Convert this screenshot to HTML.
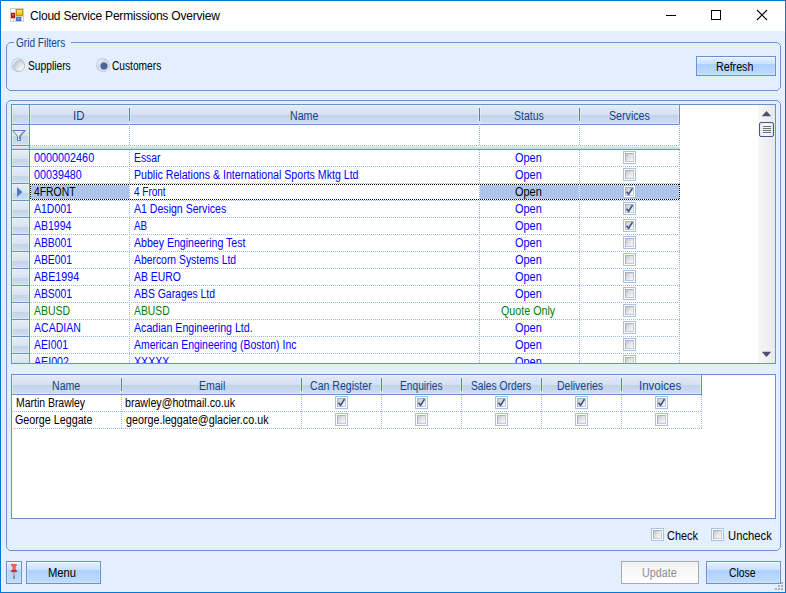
<!DOCTYPE html>
<html><head><meta charset="utf-8"><title>Cloud Service Permissions Overview</title>
<style>
*{box-sizing:border-box;margin:0;padding:0}
html,body{width:786px;height:593px;overflow:hidden;background:#e3efff}
body{font-family:"Liberation Sans",sans-serif;font-size:12px;color:#000;position:relative}
.win div,.win span,.win svg,.win i{position:absolute}
.win{position:absolute;left:0;top:0;width:786px;height:593px;border:1px solid #0078d7;background:#e3efff;overflow:hidden}
.win>*{margin:-1px 0 0 -1px}
.title{left:1px;top:1px;width:784px;height:30px;background:#fff}
.ttext{left:30px;top:9px;font-size:12px;line-height:15px;white-space:nowrap;color:#000;letter-spacing:-0.21px}
.gb{border:1px solid #6593cf;border-radius:3px}
.gbl{background:#e3efff}
.t{white-space:nowrap;line-height:14px;height:14px;font-size:12px;transform-origin:0 0}
.lb{color:#15428b}
.radio{width:14px;height:14px;border-radius:50%;background:radial-gradient(circle at 50% 50%,#fff 0,#fff 5.2px,#b4c9ea 6px,#bdd0ee 6.8px,rgba(189,208,238,0) 7.4px)}
.radio::after{content:"";position:absolute;left:2px;top:2px;width:10px;height:10px;border-radius:50%;border:1px solid #bcc1cb;background:linear-gradient(135deg,#c4c4c6 10%,#e6e6e8 55%,#fcfcfc 90%)}
.radio.on::after{border-color:#c9cdd6;background:radial-gradient(circle at 50% 50%,#46669a 0,#46669a 2.9px,#9ca8be 3.7px,#dfe3ea 4.4px,#f4f5f8 5px)}
.btn{border:1px solid #6593cf;background:linear-gradient(#e6f0ff 0,#c8dffe 38%,#add1ff 40%,#c0dbff 100%);box-shadow:inset 0 1px 0 rgba(255,255,255,.45),inset 0 0 0 1px rgba(255,255,255,.25)}
.btn.dis{border-color:#a9a9a9;background:linear-gradient(#f2f2f2,#fff);box-shadow:none}
.dt{color:#8d8d8d}
.grid{border:1px solid #6593cf;background:#fff;overflow:hidden}
.hd{background:linear-gradient(#e4ebf6 0,#d6e0f0 50%,#c1d3ea 55%,#d0ddf0 100%);border-bottom:1px solid #6593cf;height:20px}
.hc{top:0;height:19px;box-shadow:inset 0 0 0 1px rgba(255,255,255,.3)}
.ht{color:#15428b}
.hs{width:1px;top:3px;height:13px;background:#4f7fc4}
.sel{left:0;width:18px;border-right:1px solid #6593cf;border-bottom:1px solid #6593cf;background:linear-gradient(#e6ecf6 0,#d9e3f1 53%,#c2d3ea 59%,#d2deef 100%);box-shadow:inset 0 0 0 1px rgba(255,255,255,.3)}
.sel.h{background:linear-gradient(#e4ebf6 0,#d6e0f0 50%,#c1d3ea 55%,#d0ddf0 100%)}
.hl{height:1px;background-image:linear-gradient(90deg,#9db8de 50%,transparent 50%);background-size:2px 1px}
.vl{width:1px;background-image:linear-gradient(#9db8de 50%,transparent 50%);background-size:1px 2px}
.hlk{height:1px;background-image:linear-gradient(90deg,#000 50%,#fff 50%);background-size:2px 1px}
.vlk{width:1px;background-image:linear-gradient(#000 50%,#fff 50%);background-size:1px 2px}
.b{color:#0000ff}.g{color:#008000}.s{color:#000}
.cb{width:13px;height:13px;border:1px solid #a9c0e4;background:#fff}
.cb i{left:1px;top:1px;width:9px;height:9px;border:1px solid #a9b0be;border-right-color:#c3c8d2;border-bottom-color:#c3c8d2;background:linear-gradient(135deg,#c6c8cd 0,#e4e5e8 50%,#fbfbfb 100%)}
.cb .tick{left:-1px;top:-1px}
</style></head><body><div class="win">
<div class="title"></div>
<svg style="left:10px;top:8px" width="14" height="14" viewBox="0 0 14 14">
<defs><linearGradient id="gy" x1="0" y1="0" x2="0" y2="1"><stop offset="0" stop-color="#ffe98a"/><stop offset="1" stop-color="#f8b800"/></linearGradient>
<linearGradient id="gr" x1="0" y1="0" x2="0" y2="1"><stop offset="0" stop-color="#f08070"/><stop offset="1" stop-color="#c01808"/></linearGradient>
<linearGradient id="gbl" x1="0" y1="0" x2="0" y2="1"><stop offset="0" stop-color="#8fb4f4"/><stop offset="1" stop-color="#3a6fd0"/></linearGradient></defs>
<rect x="0" y="0" width="14" height="14" fill="#cfcfcf"/>
<rect x="1" y="1" width="4" height="3" fill="#fff"/><rect x="1" y="11" width="2" height="2" fill="#fff"/><rect x="4" y="11" width="1" height="2" fill="#fff"/><rect x="12" y="9" width="1" height="4" fill="#fff"/>
<rect x="6" y="1" width="7" height="7" fill="#c89400"/><rect x="7" y="2" width="5" height="5" fill="url(#gy)"/>
<rect x="1" y="5" width="4" height="5" fill="#a81000"/><rect x="2" y="6" width="2" height="3" fill="url(#gr)"/>
<rect x="6" y="9" width="5" height="4" fill="#3c72d4"/><rect x="7" y="10" width="3" height="2" fill="url(#gbl)"/>
</svg>
<div class="ttext">Cloud Service Permissions Overview</div>
<svg style="left:660px;top:5px" width="116" height="22" viewBox="0 0 116 22"><g stroke="#000" stroke-width="1" fill="none" shape-rendering="crispEdges">
<path d="M6 10.5 H16"/><rect x="51.5" y="5.5" width="9" height="9"/></g>
<path d="M97 5 L107 15 M107 5 L97 15" stroke="#000" stroke-width="1.1" fill="none"/></svg>
<svg style="left:6px;top:42px" width="775" height="49" viewBox="0 0 775 49"><path d="M0.5 3.5 L3.5 0.5 H771.5 L774.5 3.5 V45.5 L771.5 48.5 H3.5 L0.5 45.5 Z" fill="none" stroke="#6593cf" stroke-width="1"/></svg>
<div class="gbl" style="left:14px;top:40px;width:57px;height:5px"></div>
<span class="t lb" style="left:16.42px;top:36px;transform:scaleX(0.8387)">Grid Filters</span>
<div class="radio" style="left:11px;top:58px"></div><span class="t " style="left:27.55px;top:59px;transform:scaleX(0.8544)">Suppliers</span>
<div class="radio on" style="left:96px;top:58px"></div><span class="t " style="left:112.21px;top:59px;transform:scaleX(0.8492)">Customers</span>
<div class="btn" style="left:696px;top:56px;width:80px;height:20px"></div><span class="t " style="left:716.31px;top:60px;transform:scaleX(0.8900)">Refresh</span>
<svg style="left:6px;top:100px" width="775" height="451" viewBox="0 0 775 451"><path d="M0.5 3.5 L3.5 0.5 H771.5 L774.5 3.5 V447.5 L771.5 450.5 H3.5 L0.5 447.5 Z" fill="none" stroke="#6593cf" stroke-width="1"/></svg>
<div class="grid" style="left:11px;top:104px;width:765px;height:260px">
<div class="hd" style="left:0;top:0;width:668px"></div>
<div class="sel h" style="top:0;height:20px"></div>
<div class="hc" style="left:18px;width:99px"></div>
<div class="hs" style="left:117px"></div>
<span class="t ht" style="left:61.45px;top:4px;transform:scaleX(0.9457)">ID</span>
<div class="hc" style="left:118px;width:349px"></div>
<div class="hs" style="left:467px"></div>
<span class="t ht" style="left:277.52px;top:4px;transform:scaleX(0.8845)">Name</span>
<div class="hc" style="left:468px;width:99px"></div>
<div class="hs" style="left:567px"></div>
<span class="t ht" style="left:502.02px;top:4px;transform:scaleX(0.8751)">Status</span>
<div class="hc" style="left:568px;width:99px"></div>
<div class="hs" style="left:667px;top:0;height:20px;background:#6593cf"></div>
<span class="t ht" style="left:596.71px;top:4px;transform:scaleX(0.8885)">Services</span>
<div class="sel" style="top:20px;height:21px"></div>
<svg style="left:0px;top:24px" width="15" height="13" viewBox="0 0 15 13"><path d="M0.6 1.5 H13.4 L8.5 7.2 V11.5 H5.5 V7.2 Z" fill="#e4edf9" stroke="#4f81c9" stroke-width="1"/><path d="M11.6 2.6 L7.5 7.2 V10.6" fill="none" stroke="#8c857e" stroke-width="1.1"/></svg>
<div class="hl" style="left:18px;top:40px;width:650px"></div>
<div class="vl" style="left:117px;top:19px;height:240px"></div>
<div class="vl" style="left:467px;top:19px;height:240px"></div>
<div class="vl" style="left:567px;top:19px;height:240px"></div>
<div class="vl" style="left:667px;top:19px;height:240px"></div>
<div style="left:0;top:41px;width:668px;height:3px;background:linear-gradient(#e6eef9,#c6d6ed)"></div>
<div style="left:0;top:44px;width:668px;height:1px;background:#6593cf"></div>
<div class="sel" style="top:41px;height:4px;box-shadow:none"></div>
<div class="sel" style="top:45px;height:17px"></div>
<span class="t b" style="left:21.93px;top:46px;transform:scaleX(0.9012)">0000002460</span>
<span class="t b" style="left:121.64px;top:46px;transform:scaleX(0.8602)">Essar</span>
<span class="t b" style="left:503.33px;top:46px;transform:scaleX(0.9103)">Open</span>
<div class="cb" style="left:611px;top:46px"><i></i></div>
<div class="hl" style="left:19px;top:61px;width:649px"></div>
<div class="sel" style="top:62px;height:17px"></div>
<span class="t b" style="left:21.94px;top:63px;transform:scaleX(0.8956)">00039480</span>
<span class="t b" style="left:121.62px;top:63px;transform:scaleX(0.8834)">Public Relations &amp; International Sports Mktg Ltd</span>
<span class="t b" style="left:503.33px;top:63px;transform:scaleX(0.9103)">Open</span>
<div class="cb" style="left:611px;top:63px"><i></i></div>
<div class="hl" style="left:19px;top:78px;width:649px"></div>
<div class="sel" style="top:79px;height:17px"></div>
<div style="left:19px;top:80px;width:98px;height:14px;background:#afc4ea"></div>
<div style="left:468px;top:80px;width:99px;height:14px;background:#afc4ea"></div>
<div style="left:568px;top:80px;width:99px;height:14px;background:#afc4ea"></div>
<span class="t s" style="left:22.16px;top:80px;transform:scaleX(0.8641)">4FRONT</span>
<span class="t b" style="left:122.37px;top:80px;transform:scaleX(0.8324)">4 Front</span>
<span class="t s" style="left:503.33px;top:80px;transform:scaleX(0.9103)">Open</span>
<div class="cb" style="left:611px;top:80px"><i></i><svg class="tick" viewBox="0 0 13 13" width="13" height="13"><path d="M3.5 6.7 L5.6 9.3 L9.5 3.1" fill="none" stroke="#3a5a98" stroke-width="1.7"/></svg></div>
<div class="hl" style="left:19px;top:95px;width:649px"></div>
<div class="hlk" style="left:18px;top:79px;width:650px"></div>
<div class="hlk" style="left:18px;top:94px;width:650px"></div>
<div class="vlk" style="left:18px;top:79px;height:16px"></div>
<div class="vlk" style="left:667px;top:79px;height:16px"></div>
<svg style="left:5px;top:82px" width="6" height="10" viewBox="0 0 6 10"><path d="M0 0 L5.5 5 L0 10Z" fill="#4c7dc6"/></svg>
<div class="sel" style="top:96px;height:17px"></div>
<span class="t b" style="left:22.22px;top:97px;transform:scaleX(0.8741)">A1D001</span>
<span class="t b" style="left:122.42px;top:97px;transform:scaleX(0.8801)">A1 Design Services</span>
<span class="t b" style="left:503.33px;top:97px;transform:scaleX(0.9103)">Open</span>
<div class="cb" style="left:611px;top:97px"><i></i><svg class="tick" viewBox="0 0 13 13" width="13" height="13"><path d="M3.5 6.7 L5.6 9.3 L9.5 3.1" fill="none" stroke="#3a5a98" stroke-width="1.7"/></svg></div>
<div class="hl" style="left:19px;top:112px;width:649px"></div>
<div class="sel" style="top:113px;height:17px"></div>
<span class="t b" style="left:22.22px;top:114px;transform:scaleX(0.8746)">AB1994</span>
<span class="t b" style="left:122.43px;top:114px;transform:scaleX(0.8181)">AB</span>
<span class="t b" style="left:503.33px;top:114px;transform:scaleX(0.9103)">Open</span>
<div class="cb" style="left:611px;top:114px"><i></i><svg class="tick" viewBox="0 0 13 13" width="13" height="13"><path d="M3.5 6.7 L5.6 9.3 L9.5 3.1" fill="none" stroke="#3a5a98" stroke-width="1.7"/></svg></div>
<div class="hl" style="left:19px;top:129px;width:649px"></div>
<div class="sel" style="top:130px;height:17px"></div>
<span class="t b" style="left:22.22px;top:131px;transform:scaleX(0.8656)">ABB001</span>
<span class="t b" style="left:122.42px;top:131px;transform:scaleX(0.8804)">Abbey Engineering Test</span>
<span class="t b" style="left:503.33px;top:131px;transform:scaleX(0.9103)">Open</span>
<div class="cb" style="left:611px;top:131px"><i></i></div>
<div class="hl" style="left:19px;top:146px;width:649px"></div>
<div class="sel" style="top:147px;height:17px"></div>
<span class="t b" style="left:22.22px;top:148px;transform:scaleX(0.8656)">ABE001</span>
<span class="t b" style="left:122.42px;top:148px;transform:scaleX(0.8649)">Abercorn Systems Ltd</span>
<span class="t b" style="left:503.33px;top:148px;transform:scaleX(0.9103)">Open</span>
<div class="cb" style="left:611px;top:148px"><i></i></div>
<div class="hl" style="left:19px;top:163px;width:649px"></div>
<div class="sel" style="top:164px;height:17px"></div>
<span class="t b" style="left:22.22px;top:165px;transform:scaleX(0.8886)">ABE1994</span>
<span class="t b" style="left:122.42px;top:165px;transform:scaleX(0.8694)">AB EURO</span>
<span class="t b" style="left:503.33px;top:165px;transform:scaleX(0.9103)">Open</span>
<div class="cb" style="left:611px;top:165px"><i></i></div>
<div class="hl" style="left:19px;top:180px;width:649px"></div>
<div class="sel" style="top:181px;height:17px"></div>
<span class="t b" style="left:22.22px;top:182px;transform:scaleX(0.8656)">ABS001</span>
<span class="t b" style="left:122.42px;top:182px;transform:scaleX(0.8679)">ABS Garages Ltd</span>
<span class="t b" style="left:503.33px;top:182px;transform:scaleX(0.9103)">Open</span>
<div class="cb" style="left:611px;top:182px"><i></i></div>
<div class="hl" style="left:19px;top:197px;width:649px"></div>
<div class="sel" style="top:198px;height:17px"></div>
<span class="t g" style="left:22.22px;top:199px;transform:scaleX(0.8714)">ABUSD</span>
<span class="t g" style="left:122.42px;top:199px;transform:scaleX(0.8616)">ABUSD</span>
<span class="t g" style="left:489.14px;top:199px;transform:scaleX(0.8929)">Quote Only</span>
<div class="cb" style="left:611px;top:199px"><i></i></div>
<div class="hl" style="left:19px;top:214px;width:649px"></div>
<div class="sel" style="top:215px;height:17px"></div>
<span class="t b" style="left:22.22px;top:216px;transform:scaleX(0.8774)">ACADIAN</span>
<span class="t b" style="left:122.42px;top:216px;transform:scaleX(0.8848)">Acadian Engineering Ltd.</span>
<span class="t b" style="left:503.33px;top:216px;transform:scaleX(0.9103)">Open</span>
<div class="cb" style="left:611px;top:216px"><i></i></div>
<div class="hl" style="left:19px;top:231px;width:649px"></div>
<div class="sel" style="top:232px;height:17px"></div>
<span class="t b" style="left:22.22px;top:233px;transform:scaleX(0.8663)">AEI001</span>
<span class="t b" style="left:122.42px;top:233px;transform:scaleX(0.8729)">American Engineering (Boston) Inc</span>
<span class="t b" style="left:503.33px;top:233px;transform:scaleX(0.9103)">Open</span>
<div class="cb" style="left:611px;top:233px"><i></i></div>
<div class="hl" style="left:19px;top:248px;width:649px"></div>
<div class="sel" style="top:249px;height:17px"></div>
<span class="t b" style="left:22.22px;top:250px;transform:scaleX(0.8873)">AEI002</span>
<span class="t b" style="left:122.04px;top:250px;transform:scaleX(0.8851)">XXXXX</span>
<span class="t b" style="left:503.33px;top:250px;transform:scaleX(0.9103)">Open</span>
<div class="cb" style="left:611px;top:250px"><i></i></div>
<div class="hl" style="left:19px;top:265px;width:649px"></div>
<div style="left:746px;top:0;width:17px;height:258px;background:linear-gradient(90deg,#f7f7f7,#e9e9e9)"></div>
<svg style="left:746px;top:0" width="17" height="258" viewBox="0 0 17 258"><path d="M3.8 11.2 L13.2 11.2 L8.5 6Z" fill="#47506e"/><path d="M3.8 246.8 L13.2 246.8 L8.5 252Z" fill="#47506e"/><defs><linearGradient id="gth" x1="0" y1="0" x2="1" y2="0"><stop offset="0" stop-color="#e6e7ec"/><stop offset=".45" stop-color="#fbfbfd"/><stop offset="1" stop-color="#dde1ec"/></linearGradient></defs><rect x="1.5" y="17.5" width="14" height="14" rx="1.5" fill="url(#gth)" stroke="#43578c"/><path d="M5 21.5H13M5 23.5H13M5 25.5H13M5 27.5H13" stroke="#6b6f7a" stroke-width="1"/></svg>
</div>
<div class="grid" style="left:11px;top:374px;width:765px;height:145px">
<div class="hd" style="left:0;top:0;width:690px"></div>
<div class="hc" style="left:0px;width:109px"></div>
<div class="hs" style="left:109px"></div>
<span class="t ht" style="left:39.72px;top:4px;transform:scaleX(0.8812)">Name</span>
<div class="hc" style="left:110px;width:179px"></div>
<div class="hs" style="left:289px"></div>
<span class="t ht" style="left:186.62px;top:4px;transform:scaleX(0.8750)">Email</span>
<div class="hc" style="left:290px;width:79px"></div>
<div class="hs" style="left:369px"></div>
<span class="t ht" style="left:298.00px;top:4px;transform:scaleX(0.8812)">Can Register</span>
<div class="hc" style="left:370px;width:79px"></div>
<div class="hs" style="left:449px"></div>
<span class="t ht" style="left:387.85px;top:4px;transform:scaleX(0.8503)">Enquiries</span>
<div class="hc" style="left:450px;width:79px"></div>
<div class="hs" style="left:529px"></div>
<span class="t ht" style="left:459.14px;top:4px;transform:scaleX(0.8575)">Sales Orders</span>
<div class="hc" style="left:530px;width:79px"></div>
<div class="hs" style="left:609px"></div>
<span class="t ht" style="left:545.32px;top:4px;transform:scaleX(0.8756)">Deliveries</span>
<div class="hc" style="left:610px;width:79px"></div>
<div class="hs" style="left:689px;top:0;height:20px;background:#6593cf"></div>
<span class="t ht" style="left:626.84px;top:4px;transform:scaleX(0.9584)">Invoices</span>
<div class="vl" style="left:109px;top:20px;height:34px"></div>
<div class="vl" style="left:289px;top:20px;height:34px"></div>
<div class="vl" style="left:369px;top:20px;height:34px"></div>
<div class="vl" style="left:449px;top:20px;height:34px"></div>
<div class="vl" style="left:529px;top:20px;height:34px"></div>
<div class="vl" style="left:609px;top:20px;height:34px"></div>
<div class="vl" style="left:689px;top:20px;height:34px"></div>
<span class="t " style="left:3.63px;top:21px;transform:scaleX(0.8705)">Martin Brawley</span>
<span class="t " style="left:113.32px;top:21px;transform:scaleX(0.8861)">brawley@hotmail.co.uk</span>
<div class="cb" style="left:323px;top:21px"><i></i><svg class="tick" viewBox="0 0 13 13" width="13" height="13"><path d="M3.5 6.7 L5.6 9.3 L9.5 3.1" fill="none" stroke="#3a5a98" stroke-width="1.7"/></svg></div>
<div class="cb" style="left:403px;top:21px"><i></i><svg class="tick" viewBox="0 0 13 13" width="13" height="13"><path d="M3.5 6.7 L5.6 9.3 L9.5 3.1" fill="none" stroke="#3a5a98" stroke-width="1.7"/></svg></div>
<div class="cb" style="left:483px;top:21px"><i></i><svg class="tick" viewBox="0 0 13 13" width="13" height="13"><path d="M3.5 6.7 L5.6 9.3 L9.5 3.1" fill="none" stroke="#3a5a98" stroke-width="1.7"/></svg></div>
<div class="cb" style="left:563px;top:21px"><i></i><svg class="tick" viewBox="0 0 13 13" width="13" height="13"><path d="M3.5 6.7 L5.6 9.3 L9.5 3.1" fill="none" stroke="#3a5a98" stroke-width="1.7"/></svg></div>
<div class="cb" style="left:643px;top:21px"><i></i><svg class="tick" viewBox="0 0 13 13" width="13" height="13"><path d="M3.5 6.7 L5.6 9.3 L9.5 3.1" fill="none" stroke="#3a5a98" stroke-width="1.7"/></svg></div>
<div class="hl" style="left:0px;top:36px;width:690px"></div>
<span class="t " style="left:3.19px;top:38px;transform:scaleX(0.8943)">George Leggate</span>
<span class="t " style="left:113.61px;top:38px;transform:scaleX(0.8967)">george.leggate@glacier.co.uk</span>
<div class="cb" style="left:323px;top:38px"><i></i></div>
<div class="cb" style="left:403px;top:38px"><i></i></div>
<div class="cb" style="left:483px;top:38px"><i></i></div>
<div class="cb" style="left:563px;top:38px"><i></i></div>
<div class="cb" style="left:643px;top:38px"><i></i></div>
<div class="hl" style="left:1px;top:53px;width:689px"></div>
</div>
<div class="cb" style="left:651px;top:528px"><i></i></div><span class="t " style="left:667.38px;top:529px;transform:scaleX(0.9089)">Check</span>
<div class="cb" style="left:711px;top:528px"><i></i></div><span class="t " style="left:727.66px;top:529px;transform:scaleX(0.9384)">Uncheck</span>
<div class="btn" style="left:6px;top:561px;width:16px;height:23px"></div>
<svg style="left:9px;top:563px" width="10" height="17" viewBox="0 0 10 17"><defs><linearGradient id="gpn" x1="0" y1="0" x2="1" y2="0"><stop offset="0" stop-color="#c4201c"/><stop offset=".6" stop-color="#ee8a84"/><stop offset="1" stop-color="#c62a24"/></linearGradient><linearGradient id="gnd" x1="0" y1="0" x2="0" y2="1"><stop offset="0" stop-color="#c4c6c8"/><stop offset="1" stop-color="#767a7e"/></linearGradient></defs><rect x="1.9" y="1" width="6" height="2.2" rx="1" fill="#e2625a"/><rect x="3.7" y="3" width="2.9" height="4" fill="url(#gpn)"/><path d="M1.9 8.6 Q1.9 6.8 3.4 6.8 H6.6 Q8.2 6.8 8.2 8.6 Q5 10.4 1.9 8.6Z" fill="#cf2a24"/><rect x="4.1" y="9.6" width="1.9" height="6" fill="url(#gnd)"/></svg>
<div class="btn" style="left:26px;top:561px;width:75px;height:23px"></div><span class="t " style="left:48.16px;top:566px;transform:scaleX(0.9357)">Menu</span>
<div class="btn dis" style="left:621px;top:561px;width:78px;height:23px"></div><span class="t dt" style="left:641.80px;top:566px;transform:scaleX(0.8973)">Update</span>
<div class="btn" style="left:706px;top:561px;width:75px;height:23px"></div><span class="t " style="left:729.10px;top:566px;transform:scaleX(0.8665)">Close</span>
<svg style="left:775px;top:582px" width="9" height="9" viewBox="0 0 9 9" shape-rendering="crispEdges"><g fill="#b4b0ab"><rect x="6" y="0" width="2" height="2"/><rect x="3" y="3" width="2" height="2"/><rect x="6" y="3" width="2" height="2"/><rect x="0" y="6" width="2" height="2"/><rect x="3" y="6" width="2" height="2"/><rect x="6" y="6" width="2" height="2"/></g></svg>
</div></body></html>
